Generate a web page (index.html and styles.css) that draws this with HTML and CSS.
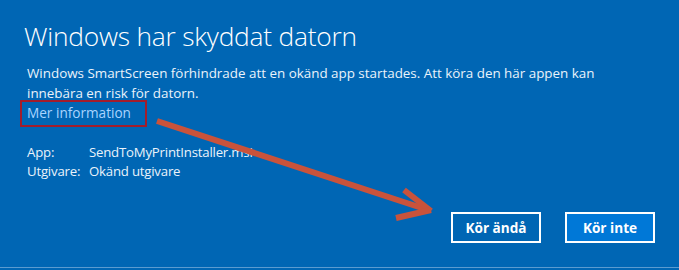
FILE: index.html
```html
<!DOCTYPE html>
<html lang="sv">
<head>
<meta charset="utf-8">
<title>Windows har skyddat datorn</title>
<link rel="stylesheet" href="styles.css">
</head>
<body>
<div class="dialog">
  <h1 class="title">Windows har skyddat datorn</h1>
  <p class="message">Windows SmartScreen förhindrade att en okänd app startades. Att köra den här appen kan innebära en risk för datorn.</p>
  <div class="more"><span class="link-box">Mer information</span></div>
  <div class="details">
    <div class="label">App:</div><div class="value">SendToMyPrintInstaller.msi</div>
    <div class="label">Utgivare:</div><div class="value">Okänd utgivare</div>
  </div>
  <div class="actions">
    <button class="btn btn-run">Kör ändå</button>
    <button class="btn btn-cancel">Kör inte</button>
  </div>
  <svg class="arrow" width="679" height="270" viewBox="0 0 679 270">
    <g stroke="#c9533b" stroke-width="6" stroke-linecap="butt" fill="none">
      <line x1="157" y1="121" x2="428" y2="210"/>
      <line x1="404" y1="190" x2="431" y2="211"/>
      <line x1="396" y1="218" x2="431" y2="210"/>
    </g>
  </svg>
</div>
</body>
</html>
```

FILE: styles.css
```css
html, body {
  margin: 0;
  padding: 0;
}
body {
  width: 679px;
  height: 270px;
  overflow: hidden;
  background: #0066b4;
  font-family: "Open Sans", "Noto Sans", "Liberation Sans", sans-serif;
  color: #ffffff;
}
.dialog {
  position: relative;
  width: 679px;
  height: 267px;
  border-bottom: 1px solid #5b9bd0;
  box-sizing: content-box;
  padding: 0;
}
.title {
  margin: 0;
  padding: 17px 0 0 24px;
  font-size: 26.3px;
  font-weight: 300;
  line-height: 38px;
  letter-spacing: -0.2px;
}
.message {
  margin: 8px 0 0 27px;
  width: 600px;
  font-size: 13.4px;
  line-height: 20px;
  color: #eaf3fb;
}
.more {
  margin: -3px 0 0 20px;
  height: 27px;
}
.link-box {
  display: inline-block;
  border: 2px solid #a21d2c;
  padding: 1px 14px 2px 5px;
  font-size: 13.6px;
  line-height: 20px;
  color: #a9d4ff;
}
.details {
  display: grid;
  grid-template-columns: 62px auto;
  margin: 16px 0 0 27px;
  font-size: 13.2px;
  line-height: 19px;
  letter-spacing: -0.2px;
  color: #eaf3fb;
}
.actions {
  display: flex;
  justify-content: flex-end;
  gap: 24px;
  padding-right: 24px;
  margin-top: 31px;
}
.btn {
  width: 90px;
  height: 31px;
  box-sizing: border-box;
  border: 2px solid #ffffff;
  color: #ffffff;
  font-family: "Open Sans", "Noto Sans", "Liberation Sans", sans-serif;
  font-weight: 700;
  font-size: 13.6px;
  padding: 0;
}
.btn-run {
  background: #0066b4;
}
.btn-cancel {
  background: #0078d7;
}
.arrow {
  position: absolute;
  left: 0;
  top: 0;
  pointer-events: none;
}
```
